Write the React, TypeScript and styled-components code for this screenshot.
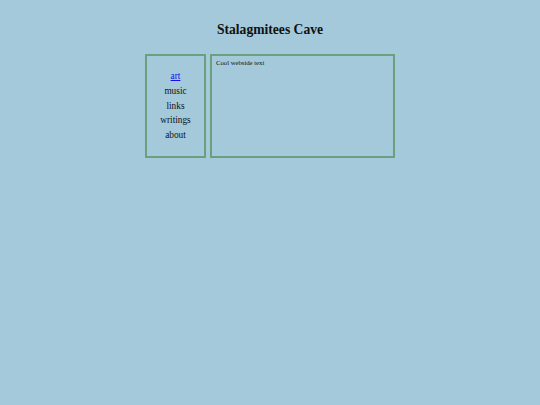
import styled, { createGlobalStyle } from 'styled-components';

const GlobalStyle = createGlobalStyle`
  html, body {
    margin: 0;
    padding: 0;
    background: #a3c9db;
    font-family: "Liberation Serif", "Times New Roman", serif;
    color: #111;
  }
`;

const Page = styled.div`
  width: 540px;
  height: 405px;
  display: flex;
  flex-direction: column;
  align-items: center;
`;

const Title = styled.h1`
  margin: 21px 0 0;
  font-size: 13.6px;
  line-height: 18px;
  font-weight: bold;
`;

const Layout = styled.div`
  margin-top: 15px;
  display: flex;
  gap: 4px;
`;

const Box = styled.div<{ $w: number }>`
  box-sizing: border-box;
  width: ${(p) => p.$w}px;
  height: 104px;
  border: 2px solid #6a9f80;
`;

const Nav = styled(Box)`
  display: flex;
  flex-direction: column;
  align-items: center;
  padding-top: 13px;
`;

const NavItem = styled.a<{ $active?: boolean }>`
  font-size: 9.3px;
  line-height: 14.8px;
  color: ${(p) => (p.$active ? '#1a0dee' : '#111')};
  text-decoration: ${(p) => (p.$active ? 'underline' : 'none')};
`;

const Content = styled(Box)`
  padding: 2px 4px;
  font-size: 6.7px;
  line-height: 9px;
`;

const links = ['art', 'music', 'links', 'writings', 'about'];

export default function App() {
  return (
    <Page>
      <GlobalStyle />
      <Title>Stalagmitees Cave</Title>
      <Layout>
        <Nav $w={61}>
          {links.map((l, i) => (
            <NavItem key={l} href="#" $active={i === 0}>
              {l}
            </NavItem>
          ))}
        </Nav>
        <Content $w={185}>Cool webside text</Content>
      </Layout>
    </Page>
  );
}
